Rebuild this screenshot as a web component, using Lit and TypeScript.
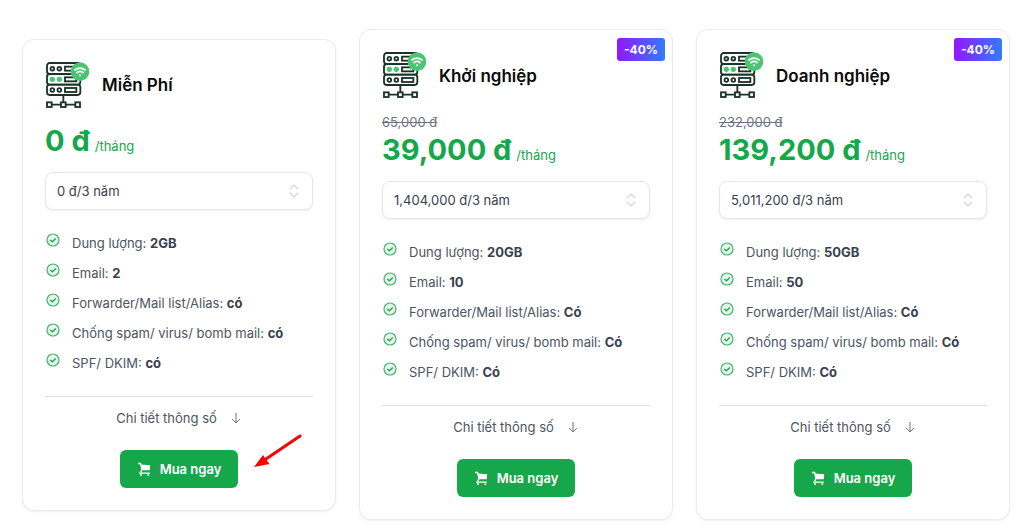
import { LitElement, html, css, nothing } from "lit";
import { customElement, property } from "lit/decorators.js";

interface Feature {
  label: string;
  value: string;
}

interface Plan {
  id: string;
  name: string;
  price: string;
  oldPrice?: string;
  discount?: string;
  term: string;
  features: Feature[];
  highlighted?: boolean;
}

const features = (storage: string, email: string, yes: string): Feature[] => [
  { label: "Dung lượng:", value: storage },
  { label: "Email:", value: email },
  { label: "Forwarder/Mail list/Alias:", value: yes },
  { label: "Chống spam/ virus/ bomb mail:", value: yes },
  { label: "SPF/ DKIM:", value: yes },
];

const plans: Plan[] = [
  {
    id: "free",
    name: "Miễn Phí",
    price: "0 đ",
    term: "0 đ/3 năm",
    features: features("2GB", "2", "có"),
    highlighted: true,
  },
  {
    id: "startup",
    name: "Khởi nghiệp",
    price: "39,000 đ",
    oldPrice: "65,000 đ",
    discount: "-40%",
    term: "1,404,000 đ/3 năm",
    features: features("20GB", "10", "Có"),
  },
  {
    id: "business",
    name: "Doanh nghiệp",
    price: "139,200 đ",
    oldPrice: "232,000 đ",
    discount: "-40%",
    term: "5,011,200 đ/3 năm",
    features: features("50GB", "50", "Có"),
  },
];

const serverIcon = html`
  <svg class="server" viewBox="0 0 135 141" aria-hidden="true">
    <g fill="none" stroke="#1b3427" stroke-width="5.5">
      <rect x="6" y="3" width="100" height="33" rx="8" />
      <rect x="6" y="36" width="100" height="32" rx="8" />
      <rect x="6" y="68" width="100" height="31" rx="8" />
      <circle cx="22" cy="20" r="5.5" />
      <circle cx="43" cy="20" r="5.5" />
      <rect x="60" y="14" width="34" height="12" />
      <rect x="60" y="46" width="34" height="12" />
      <circle cx="22" cy="84" r="5.5" />
      <circle cx="43" cy="84" r="5.5" />
      <rect x="60" y="78" width="34" height="12" />
      <path d="M55 99v22M20 128h28M62 128h30" />
      <rect x="6" y="121" width="14" height="14" />
      <rect x="48" y="121" width="14" height="14" />
      <rect x="91" y="121" width="14" height="14" />
    </g>
    <circle cx="22" cy="52" r="8" fill="#4cc474" />
    <circle cx="43" cy="52" r="8" fill="#4cc474" />
    <circle cx="105" cy="29" r="28" fill="#4cc474" />
    <g fill="none" stroke="#fff" stroke-width="5" stroke-linecap="round">
      <path d="M90 24a23 23 0 0 1 30 0M96 32a14 14 0 0 1 18 0" />
    </g>
    <circle cx="105" cy="40" r="3" fill="#fff" />
  </svg>
`;

const checkIcon = html`
  <svg class="check" viewBox="0 0 14 14" aria-hidden="true">
    <circle cx="7" cy="7" r="6" fill="#e4f6eb" stroke="#45b36d" stroke-width="1.2" />
    <path d="M4.2 7l2.2 1.8 3.4-3.4" fill="none" stroke="#27a557" stroke-width="1.4" />
  </svg>
`;

@customElement("plan-card")
export class PlanCard extends LitElement {
  @property({ attribute: false }) plan!: Plan;

  static styles = css`
    :host {
      display: block;
      min-width: 0;
    }
    .card {
      position: relative;
      box-sizing: border-box;
      padding: 22px;
      border: 1px solid #e8ebf4;
      border-radius: 12px;
      background: #fff;
      box-shadow: 0 1px 2px rgba(60, 70, 130, 0.08);
      font-size: 13px;
      line-height: 20px;
      color: #4b5563;
    }
    .badge {
      position: absolute;
      top: 8px;
      right: 7px;
      box-sizing: border-box;
      padding: 0 7px;
      border-radius: 3px;
      background: linear-gradient(90deg, #9317fb, #327bff);
      color: #fff;
      font-size: 12px;
      font-weight: 700;
      line-height: 23px;
    }
    .head {
      display: flex;
      align-items: center;
      gap: 12px;
      margin-bottom: 14px;
    }
    .server {
      display: block;
      width: 45px;
      height: 47px;
    }
    .name {
      margin: 0;
      color: #0a0a0a;
      font-size: 17px;
      font-weight: 600;
      line-height: 28px;
    }
    .old {
      display: block;
      color: #6b7280;
      line-height: 19px;
    }
    .price {
      display: flex;
      align-items: baseline;
      gap: 5px;
      margin: 0 0 13px;
      color: #16a74b;
    }
    .amount {
      font-size: 29px;
      font-weight: 700;
      line-height: 36px;
    }
    .term {
      display: grid;
      align-items: center;
      margin-bottom: 23px;
    }
    .select,
    .chevrons {
      grid-area: 1 / 1;
    }
    .select {
      box-sizing: border-box;
      width: 100%;
      height: 38px;
      padding: 0 32px 0 11px;
      border: 1px solid #e5e8f2;
      border-radius: 8px;
      appearance: none;
      background: #fff;
      box-shadow: 0 1px 2px rgba(60, 70, 130, 0.1);
      color: #374151;
      font: inherit;
    }
    .chevrons {
      justify-self: end;
      width: 10px;
      height: 14px;
      margin-right: 14px;
      pointer-events: none;
    }
    .features {
      display: grid;
      gap: 10px;
      margin: 0 0 23px;
      padding: 0;
      list-style: none;
    }
    .feature {
      display: flex;
      gap: 12px;
    }
    .check {
      flex: none;
      width: 14px;
      height: 14px;
      margin-left: 1px;
    }
    .value {
      color: #374151;
      font-weight: 700;
    }
    .foot {
      display: grid;
      justify-items: center;
      gap: 22px;
      padding-top: 11px;
      border-top: 1px solid #dcdfe3;
    }
    .details {
      display: flex;
      align-items: center;
      gap: 13px;
      padding: 0;
      border: 0;
      background: none;
      color: inherit;
      font: inherit;
    }
    .down {
      width: 12px;
      height: 12px;
    }
    .action {
      position: relative;
    }
    .buy {
      display: flex;
      align-items: center;
      gap: 9px;
      height: 38px;
      padding: 0 17px;
      border: 0;
      border-radius: 6px;
      background: #16a74b;
      color: #fff;
      font: inherit;
      font-weight: 600;
    }
    .cart {
      width: 14px;
      height: 14px;
    }
    .pointer {
      position: absolute;
      left: 100%;
      bottom: 20px;
      width: 48px;
      height: 34px;
      margin-left: 16px;
    }
  `;

  render() {
    const p = this.plan;
    return html`
      <article class="card">
        ${p.discount ? html`<span class="badge">${p.discount}</span>` : nothing}
        <header class="head">
          ${serverIcon}
          <h2 class="name">${p.name}</h2>
        </header>
        ${p.oldPrice ? html`<s class="old">${p.oldPrice}</s>` : nothing}
        <p class="price">
          <span class="amount">${p.price}</span>
          <span>/tháng</span>
        </p>
        <div class="term">
          <select class="select" id=${p.id} aria-label=${p.name}>
            <option>${p.term}</option>
          </select>
          <svg class="chevrons" viewBox="0 0 10 14" aria-hidden="true">
            <path d="M1 5l4-4 4 4M1 9l4 4 4-4" fill="none" stroke="#d0d3d8" stroke-width="1.2" />
          </svg>
        </div>
        <ul class="features">
          ${p.features.map(
            (f) => html`
              <li class="feature">
                ${checkIcon}
                <span>${f.label} <b class="value">${f.value}</b></span>
              </li>
            `,
          )}
        </ul>
        <footer class="foot">
          <button class="details" type="button">
            Chi tiết thông số
            <svg class="down" viewBox="0 0 12 12" aria-hidden="true">
              <path d="M6 1v10M2 7l4 4 4-4" fill="none" stroke="#6b7280" />
            </svg>
          </button>
          <div class="action">
            <button class="buy" type="button">
              <svg class="cart" viewBox="0 0 14 14" aria-hidden="true">
                <path d="M1 1.5h2.6L5 7.5l-2 3.6h9.8" fill="none" stroke="#fff" stroke-width="1.3" />
                <path d="M3.6 2.6l9.6.6-.5 5H4.8z" fill="#fff" />
                <circle cx="4" cy="13" r="1" fill="#fff" />
                <circle cx="11.3" cy="13" r="1" fill="#fff" />
              </svg>
              Mua ngay
            </button>
            ${p.highlighted
              ? html`<svg class="pointer" viewBox="0 0 48 34" aria-hidden="true">
                  <path d="M46 2L12 25" stroke="#f00" stroke-width="3" stroke-linecap="round" />
                  <path d="M0 33l9-12 2 3 4.5 6z" fill="#f00" />
                </svg>`
              : nothing}
          </div>
        </footer>
      </article>
    `;
  }
}

@customElement("app-root")
export class AppRoot extends LitElement {
  static styles = css`
    :host {
      display: block;
      background: #fff;
      font-family: Inter, "Noto Sans", sans-serif;
    }
    .plans {
      display: grid;
      grid-template-columns: repeat(3, minmax(0, 1fr));
      align-items: center;
      gap: 23px;
      padding: 29px 14px 10px 22px;
    }
  `;

  render() {
    return html`
      <main class="plans">
        ${plans.map((plan) => html`<plan-card .plan=${plan}></plan-card>`)}
      </main>
    `;
  }
}
